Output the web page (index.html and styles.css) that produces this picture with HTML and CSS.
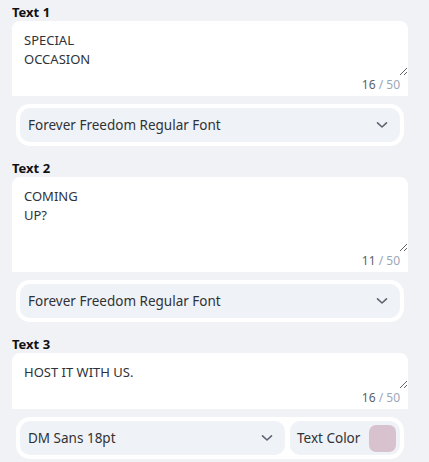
FILE: index.html
```html
<!DOCTYPE html>
<html>
<head>
<meta charset="utf-8">
<link rel="stylesheet" href="styles.css">
</head>
<body>
<div class="panel">
  <section class="field">
    <div class="label">Text 1</div>
    <div class="box">
      <textarea class="ta ta-1">SPECIAL
OCCASION</textarea>
      <div class="counter"><span class="count">16</span> <span class="max">/ 50</span></div>
    </div>
    <div class="tools">
      <div class="select">
        <span>Forever Freedom Regular Font</span>
        <svg class="chev" width="12" height="8" viewBox="0 0 12 8"><path d="M1.5 1.8 L6 6 L10.5 1.8" fill="none" stroke="#5f6672" stroke-width="1.6" stroke-linecap="round" stroke-linejoin="round"/></svg>
      </div>
    </div>
  </section>

  <section class="field">
    <div class="label">Text 2</div>
    <div class="box">
      <textarea class="ta ta-2">COMING
UP?</textarea>
      <div class="counter"><span class="count">11</span> <span class="max">/ 50</span></div>
    </div>
    <div class="tools">
      <div class="select">
        <span>Forever Freedom Regular Font</span>
        <svg class="chev" width="12" height="8" viewBox="0 0 12 8"><path d="M1.5 1.8 L6 6 L10.5 1.8" fill="none" stroke="#5f6672" stroke-width="1.6" stroke-linecap="round" stroke-linejoin="round"/></svg>
      </div>
    </div>
  </section>

  <section class="field">
    <div class="label">Text 3</div>
    <div class="box">
      <textarea class="ta ta-3">HOST IT WITH US.</textarea>
      <div class="counter"><span class="count">16</span> <span class="max">/ 50</span></div>
    </div>
    <div class="tools">
      <div class="select">
        <span>DM Sans 18pt</span>
        <svg class="chev" width="12" height="8" viewBox="0 0 12 8"><path d="M1.5 1.8 L6 6 L10.5 1.8" fill="none" stroke="#5f6672" stroke-width="1.6" stroke-linecap="round" stroke-linejoin="round"/></svg>
      </div>
      <div class="color">
        <span>Text Color</span>
        <span class="swatch"></span>
      </div>
    </div>
  </section>
</div>
</body>
</html>
```

FILE: styles.css
```css
html, body {
  margin: 0;
  padding: 0;
  background: #f0f2f5;
}
body {
  font-family: "Noto Sans", "Open Sans", sans-serif;
  color: #2f3237;
}
.panel {
  width: 396px;
  padding: 3px 0 0 12px;
}
.field {
  display: flex;
  flex-direction: column;
}
.field + .field {
  margin-top: 13px;
}
.label {
  font-weight: 700;
  font-size: 13px;
  line-height: 18px;
  color: #111;
}
.box {
  background: #fff;
  border-radius: 8px 8px 0 0;
  display: flex;
  flex-direction: column;
}
.ta {
  display: block;
  box-sizing: border-box;
  width: 100%;
  border: none;
  outline: none;
  background: transparent;
  resize: vertical;
  margin: 0;
  padding: 10px 12px;
  font-family: "Noto Sans", "Open Sans", sans-serif;
  font-size: 13px;
  line-height: 19px;
  color: #2f3237;
  overflow: hidden;
}
.ta-1 { height: 55px; }
.ta-2 { height: 75px; }
.ta-3 { height: 36px; }
.counter {
  text-align: right;
  padding: 0 8px 0 0;
  height: 20px;
  font-size: 12px;
  line-height: 18px;
}
.count { color: #5a5f68; }
.max { color: #9aa6ba; }
.tools {
  margin: 8px 4px 0 4px;
  background: #fff;
  border-radius: 14px;
  padding: 4px;
  display: flex;
  gap: 5px;
}
.select {
  flex: 1;
  height: 34px;
  background: #eff2f6;
  border-radius: 10px;
  display: flex;
  align-items: center;
  justify-content: space-between;
  padding: 0 12px 0 8px;
  font-size: 13.5px;
  color: #2f3237;
}
.chev {
  display: block;
}
.color {
  box-sizing: border-box;
  width: 110px;
  height: 34px;
  background: #eff2f6;
  border-radius: 10px;
  display: flex;
  align-items: center;
  justify-content: space-between;
  padding: 0 4px 0 7px;
  font-size: 13.5px;
  color: #2f3237;
}
.swatch {
  width: 27px;
  height: 27px;
  border-radius: 7px;
  background: #d8c2cd;
}
```
